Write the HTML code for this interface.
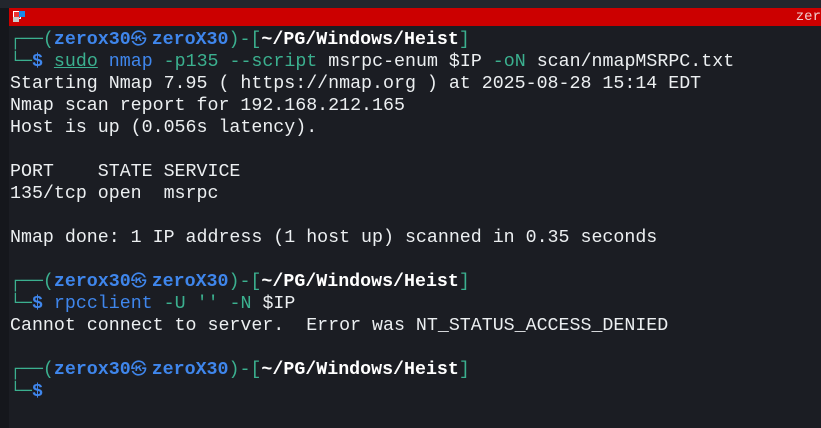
<!DOCTYPE html>
<html><head><meta charset="utf-8"><style>
html,body{margin:0;padding:0;width:821px;height:428px;overflow:hidden;background:#1b1d23;}
.top{position:absolute;left:0;top:0;width:821px;height:8px;background:#23262d;}
.bar{position:absolute;left:9px;top:8px;width:812px;height:18px;background:#cc0000;}
.bar span{position:absolute;right:0;top:0;color:#f0d0d0;font:14px "Liberation Mono",monospace;line-height:18px;}
.strip{position:absolute;left:0;top:8px;width:9px;height:420px;background:#15171c;}
.term{position:absolute;left:10px;top:29px;font-family:"Liberation Mono","DejaVu Sans Mono",monospace;font-size:18.3px;line-height:22px;color:#eceff1;white-space:pre;}
.g{color:#3bb08f}.b{color:#3f86ec;font-weight:bold}.bl{color:#3f86ec}.w{font-weight:bold;color:#fff}
.t{color:#3bb08f}.u{text-decoration:underline}
.k{display:inline-block;width:21px;overflow:hidden;font-size:16px;font-weight:normal;text-align:left;vertical-align:top;}
</style></head><body>
<div class="top"></div>
<div class="strip"></div>
<div class="bar"><span>zer</span></div>
<div style="position:absolute;left:13px;top:11px;width:6px;height:6px;background:#e33;border:1px solid #fff"></div>
<div style="position:absolute;left:19px;top:11px;width:6px;height:6px;background:#1a8ae6"></div>
<div style="position:absolute;left:13px;top:17px;width:6px;height:5px;background:#ccc"></div>
<div class="term"><span class="g">┌──(</span><span class="b">zerox30<span class="k">㉿</span>zeroX30</span><span class="g">)-[</span><span class="w">~/PG/Windows/Heist</span><span class="g">]</span>
<span class="g">└─</span><span class="b">$</span> <span class="t u">sudo</span> <span class="bl">nmap</span> <span class="t">-p135 --script</span> msrpc-enum $IP <span class="t">-oN</span> scan/nmapMSRPC.txt
Starting Nmap 7.95 ( https://nmap.org ) at 2025-08-28 15:14 EDT
Nmap scan report for 192.168.212.165
Host is up (0.056s latency).

PORT    STATE SERVICE
135/tcp open  msrpc

Nmap done: 1 IP address (1 host up) scanned in 0.35 seconds

<span class="g">┌──(</span><span class="b">zerox30<span class="k">㉿</span>zeroX30</span><span class="g">)-[</span><span class="w">~/PG/Windows/Heist</span><span class="g">]</span>
<span class="g">└─</span><span class="b">$</span> <span class="bl">rpcclient</span> <span class="t">-U</span> <span class="t">''</span> <span class="t">-N</span> $IP
Cannot connect to server.  Error was NT_STATUS_ACCESS_DENIED

<span class="g">┌──(</span><span class="b">zerox30<span class="k">㉿</span>zeroX30</span><span class="g">)-[</span><span class="w">~/PG/Windows/Heist</span><span class="g">]</span>
<span class="g">└─</span><span class="b">$</span></div>
</body></html>
